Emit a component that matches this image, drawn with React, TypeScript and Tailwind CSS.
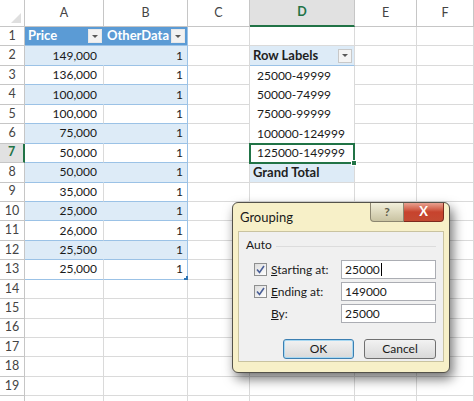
import React from 'react';

const COLS = [
  { key: 'A', w: 'w-[79px]' },
  { key: 'B', w: 'w-[84px]' },
  { key: 'C', w: 'w-[62px]' },
  { key: 'D', w: 'w-[105px]' },
  { key: 'E', w: 'w-[62px]' },
  { key: 'F', w: 'flex-1' },
];

const prices = ['149,000', '136,000', '100,000', '100,000', '75,000', '50,000', '50,000', '35,000', '25,000', '26,000', '25,500', '25,000'];
const pivot = ['25000-49999', '50000-74999', '75000-99999', '100000-124999', '125000-149999'];

function DropBtn({ light }: { light?: boolean }) {
  return (
    <span
      className={`flex h-[14px] w-[14px] items-center justify-center border ${
        light ? 'border-[#c8c8c8] bg-[#f4f4f4]' : 'border-[#e8e8e8] bg-[#f2f2f2]'
      }`}
    >
      <span className="h-0 w-0 border-x-[3px] border-t-[3px] border-x-transparent border-t-[#595959]" />
    </span>
  );
}

function Cell({ row, col }: { row: number; col: string }) {
  const w = COLS.find((c) => c.key === col)!.w;
  const base = `${w} h-full shrink-0 border-r border-b border-[#dadada] flex items-center`;

  // table header
  if (row === 1 && (col === 'A' || col === 'B')) {
    return (
      <div className={`${w} h-full shrink-0 flex items-center justify-between bg-[#5b9bd5] pl-[3px] pr-[2px] font-bold text-white border-b border-[#9bc2e6] ${col === 'B' ? 'border-r border-r-[#9bc2e6]' : ''}`}>
        <span>{col === 'A' ? 'Price' : 'OtherData'}</span>
        <DropBtn />
      </div>
    );
  }

  // table body
  if (row >= 2 && row <= 13 && (col === 'A' || col === 'B')) {
    const band = row % 2 === 0;
    const value = col === 'A' ? prices[row - 2] : '1';
    return (
      <div
        className={`${w} relative h-full shrink-0 flex items-center justify-end border-b border-[#9bc2e6] text-[12px] ${
          band ? 'bg-[#ddebf7]' : 'bg-white'
        } ${col === 'A' ? (band ? 'border-r border-r-[#ddebf7] pr-[6px]' : 'border-r border-r-[#dadada] pr-[6px]') : 'border-r border-r-[#9bc2e6] pr-[4px]'}`}
      >
        {value}
        {row === 13 && col === 'B' && (
          <span className="absolute bottom-[-1px] right-[-1px] h-[4px] w-[4px] border-b-2 border-r-2 border-[#2e75b6]" />
        )}
      </div>
    );
  }

  if (col === 'D' && row === 2) {
    return (
      <div className={`${w} h-full shrink-0 flex items-center justify-between bg-[#ddebf7] pl-[3px] pr-[2px] font-bold text-[#1f1f1f] border-b border-[#9bc2e6] border-r border-r-[#dadada]`}>
        <span>Row Labels</span>
        <DropBtn light />
      </div>
    );
  }
  if (col === 'D' && row >= 3 && row <= 7) {
    const sel = row === 7;
    return (
      <div className={`${w} relative h-full shrink-0 flex items-center bg-white pl-[7px] text-[12px] border-r border-[#dadada]`}>
        {pivot[row - 3]}
        {sel && (
          <>
            <span className="pointer-events-none absolute inset-x-[-1px] top-[-1px] bottom-[-1px] border-2 border-[#217346]" />
            <span className="absolute bottom-[-3px] right-[-3px] h-[6px] w-[6px] border border-white bg-[#217346]" />
          </>
        )}
      </div>
    );
  }
  if (col === 'D' && row === 8) {
    return (
      <div className={`${w} h-full shrink-0 flex items-center bg-[#ddebf7] pl-[3px] font-bold text-[#1f1f1f] border-t border-[#9bc2e6] border-b border-b-[#dadada] border-r border-r-[#dadada]`}>
        Grand Total
      </div>
    );
  }
  return <div className={base} />;
}

function Check() {
  return (
    <span className="flex h-[13px] w-[13px] items-center justify-center border border-[#8e8f8f] bg-gradient-to-br from-[#dcdcdc] to-white">
      <svg width="9" height="9" viewBox="0 0 9 9">
        <path d="M1 4.5 L3.5 7.5 L8 1" fill="none" stroke="#4a5f97" strokeWidth="1.6" />
      </svg>
    </span>
  );
}

function GroupingDialog() {
  return (
    <div className="absolute left-[232px] top-[202px] h-[171px] w-[218px] rounded-[6px] border border-[#54524a] bg-[#f7f0c8] shadow-[3px_6px_12px_rgba(0,0,0,0.55)] font-['Lato',sans-serif] text-[12px] text-[#1a1a1a]">
      <div className="flex h-[28px] items-start justify-between">
        <span className="pl-[7px] pt-[5px] text-[13px]">Grouping</span>
        <div className="flex">
          <span className="flex h-[19px] w-[34px] items-center justify-center rounded-bl-[4px] border border-t-0 border-[#8c8670] bg-gradient-to-b from-[#f2efda] to-[#c9c3a2] text-[12px] font-bold text-[#5f5a48]">
            ?
          </span>
          <span className="mr-[5px] flex h-[19px] w-[40px] items-center justify-center rounded-br-[4px] border border-l-0 border-t-0 border-[#7d2a1e] bg-gradient-to-b from-[#e8a190] via-[#c7432d] to-[#c44a32] text-[13px] font-bold text-white">
            X
          </span>
        </div>
      </div>
      <div className="mx-[5px] h-[131px] border border-[#c9c3a0] bg-[#f0f0f0] px-[7px] pt-[4px]">
        <div className="flex items-center gap-[4px]">
          <span>Auto</span>
          <span className="mt-[2px] h-px flex-1 bg-[#dcdcdc]" />
        </div>
        <div className="mt-[6px] flex flex-col gap-[3px] pl-[8px]">
          <div className="flex h-[19px] items-center">
            <Check />
            <span className="ml-[4px] w-[70px]"><u>S</u>tarting at:</span>
            <span className="flex h-[19px] flex-1 items-center border border-[#abadb3] bg-white pl-[3px]">
              25000<span className="ml-px h-[13px] w-px bg-black" />
            </span>
          </div>
          <div className="flex h-[19px] items-center">
            <Check />
            <span className="ml-[4px] w-[70px]"><u>E</u>nding at:</span>
            <span className="flex h-[19px] flex-1 items-center border border-[#abadb3] bg-white pl-[3px]">149000</span>
          </div>
          <div className="flex h-[19px] items-center">
            <span className="ml-[17px] w-[70px]"><u>B</u>y:</span>
            <span className="flex h-[19px] flex-1 items-center border border-[#abadb3] bg-white pl-[3px]">25000</span>
          </div>
        </div>
        <div className="mt-[16px] flex justify-end gap-[10px]">
          <span className="flex h-[20px] w-[71px] items-center justify-center rounded-[3px] border border-[#3c7fb1] bg-gradient-to-b from-[#f2f2f2] to-[#d9d9d9] shadow-[inset_0_0_0_1px_#a7d8f2]">
            OK
          </span>
          <span className="flex h-[20px] w-[72px] items-center justify-center rounded-[3px] border border-[#707070] bg-gradient-to-b from-[#f2f2f2] to-[#d9d9d9]">
            Cancel
          </span>
        </div>
      </div>
    </div>
  );
}

export default function App() {
  const rows = Array.from({ length: 20 }, (_, i) => i + 1);
  return (
    <div className="relative h-[401px] w-[474px] overflow-hidden bg-white font-['Lato',sans-serif] text-[13px] text-[#1a1a1a]">
      {/* column headers */}
      <div className="flex h-[27px] text-[12.5px]">
        <div className="relative h-full w-[25px] shrink-0 border-r border-b border-[#c6c6c6] bg-white">
          <span className="absolute bottom-[3px] right-[3px] h-0 w-0 border-b-[10px] border-l-[10px] border-l-transparent border-b-[#dfdfdf]" />
        </div>
        {COLS.map((c) =>
          c.key === 'D' ? (
            <div key={c.key} className={`${c.w} flex h-full shrink-0 items-center justify-center border-r border-[#c6c6c6] border-b-2 border-b-[#217346] bg-[#e1e1e1] font-bold text-[#217346]`}>
              {c.key}
            </div>
          ) : (
            <div key={c.key} className={`${c.w} flex h-full shrink-0 items-center justify-center border-r border-b border-[#c6c6c6] bg-white text-[#444]`}>
              {c.key}
            </div>
          )
        )}
      </div>

      {rows.map((r) => (
        <div key={r} className="flex h-[19.45px]">
          {r === 7 ? (
            <div className="flex h-full w-[25px] shrink-0 items-center justify-center border-b border-[#c6c6c6] border-r-2 border-r-[#217346] bg-[#e1e1e1] text-[12.5px] font-bold text-[#217346]">
              {r}
            </div>
          ) : (
            <div className="flex h-full w-[25px] shrink-0 items-center justify-center border-r border-b border-[#c6c6c6] bg-white text-[12.5px] text-[#444]">
              {r < 20 ? r : ''}
            </div>
          )}
          {COLS.map((c) => (
            <Cell key={c.key} row={r} col={c.key} />
          ))}
        </div>
      ))}

      <GroupingDialog />
    </div>
  );
}
